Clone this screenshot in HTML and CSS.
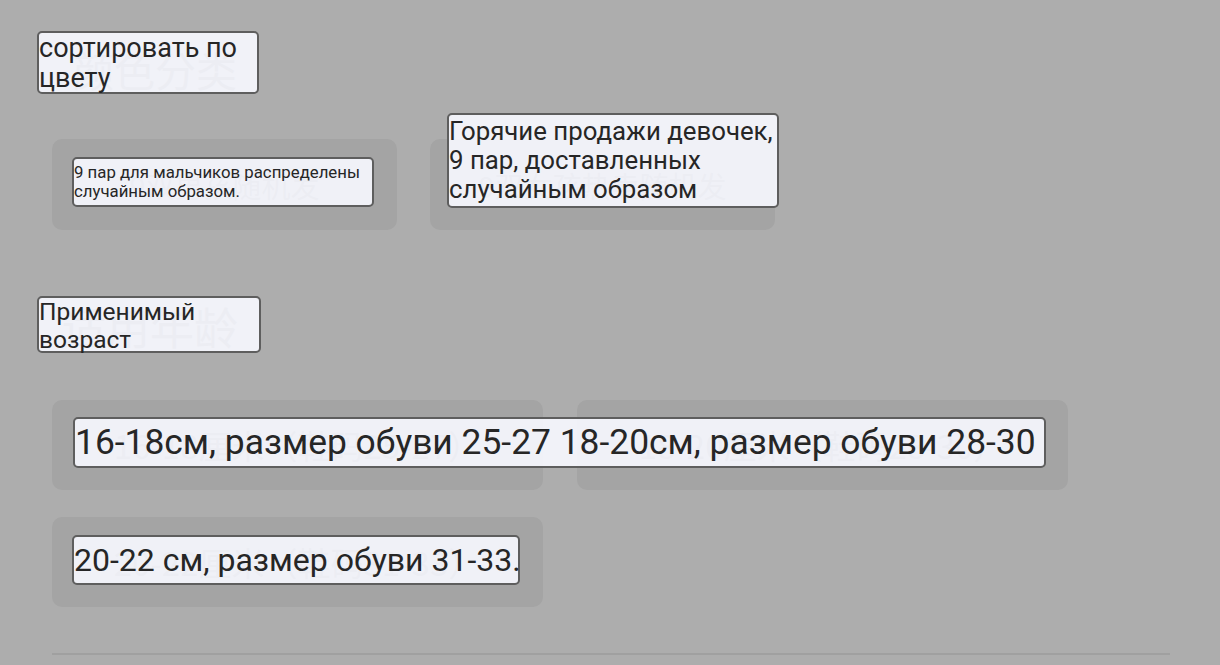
FILE: index.html
```html
<!DOCTYPE html>
<html lang="ru">
<head>
  <meta charset="UTF-8">
  <title>Выбор товара</title>
  <link rel="stylesheet" href="styles.css">
</head>
<body>
  <div class="page">
    <div class="heading heading-color">
      <span class="cn">颜色分类</span>
      <div class="tr">сортировать по цвету</div>
    </div>

    <div class="chips">
      <div class="chip">
        <span class="cn cn-small">9双男孩随机发</span>
        <div class="tr tr-boys">9 пар для мальчиков распределены случайным образом.</div>
      </div>
      <div class="chip">
        <span class="cn cn-small">9双女孩热卖随机发</span>
        <div class="tr tr-girls">Горячие продажи девочек, 9 пар, доставленных случайным образом</div>
      </div>
    </div>

    <div class="heading heading-age">
      <span class="cn">适用年龄</span>
      <div class="tr">Применимый возраст</div>
    </div>

    <div class="chips chips-wide">
      <div class="chip">
        <span class="cn cn-size">16-18厘米（鞋码25-27）</span>
        <div class="tr tr-size-pair">16-18см, размер обуви 25-27 18-20см, размер обуви 28-30</div>
      </div>
      <div class="chip">
        <span class="cn cn-size">18-20厘米（鞋码28-30）</span>
      </div>
      <div class="chip">
        <span class="cn cn-size">20-22厘米（鞋码31-33）</span>
        <div class="tr tr-size">20-22 см, размер обуви 31-33.</div>
      </div>
    </div>

    <div class="rule"></div>
  </div>
</body>
</html>
```

FILE: styles.css
```css
body {
  margin: 0;
  background: #adadad;
  font-family: Roboto, "Liberation Sans", sans-serif;
  color: #262626;
}
.page {
  padding: 31px 50px 0 37px;
}
.cn {
  font-family: "Noto Sans CJK SC", sans-serif;
  color: #444;
  white-space: nowrap;
}

/* translation boxes on top of the original text */
.tr {
  position: absolute;
  z-index: 1;
  box-sizing: border-box;
  border: 2px solid #5e5e5e;
  border-radius: 5px;
  background: rgba(243, 245, 251, 0.955);
  color: #262626;
  text-align: left;
}

.heading {
  position: relative;
}
.heading .tr {
  left: 0;
  top: 0;
  width: 100%;
  height: 100%;
}
.heading-color {
  width: 222px;
  height: 63px;
}
.heading-color .cn {
  display: block;
  padding: 14px 0 0 36px;
  font-size: 41px;
  line-height: 48px;
}
.heading-color .tr {
  font-size: 27px;
  line-height: 30px;
}
.heading-age {
  width: 224px;
  height: 57px;
  margin-top: 66px;
}
.heading-age .cn {
  display: block;
  padding: 6px 0 0 25px;
  font-size: 44px;
  line-height: 48px;
}
.heading-age .tr {
  font-size: 24.5px;
  line-height: 28px;
}

.chips {
  display: grid;
  grid-template-columns: 345px 345px;
  gap: 27px 33px;
  margin: 45px 0 0 15px;
}
.chips-wide {
  grid-template-columns: 491px 491px;
  gap: 27px 34px;
  margin-top: 47px;
}
.chip {
  position: relative;
  height: 91px;
  background: #a4a4a4;
  border-radius: 10px;
  display: flex;
  align-items: center;
  justify-content: center;
}
.chips-wide .chip {
  height: 90px;
}
.cn-small {
  font-size: 29px;
}
.cn-size {
  font-size: 33px;
}

.tr-boys {
  left: 20px;
  top: 18px;
  width: 302px;
  height: 50px;
  display: flex;
  align-items: center;
  font-size: 16.8px;
  line-height: 19px;
}
.tr-girls {
  left: 17px;
  top: -26px;
  width: 332px;
  height: 95px;
  font-size: 25.8px;
  line-height: 29px;
  padding-top: 2px;
}
.tr-size-pair {
  left: 21px;
  top: 17px;
  width: 973px;
  height: 51px;
  font-size: 35.4px;
  line-height: 47px;
  white-space: nowrap;
}
.tr-size {
  left: 20px;
  top: 18px;
  width: 448px;
  height: 50px;
  font-size: 32px;
  line-height: 46px;
  white-space: nowrap;
}

.rule {
  height: 2px;
  width: 1118px;
  margin: 46px 0 0 15px;
  background: #a0a0a0;
}
```
